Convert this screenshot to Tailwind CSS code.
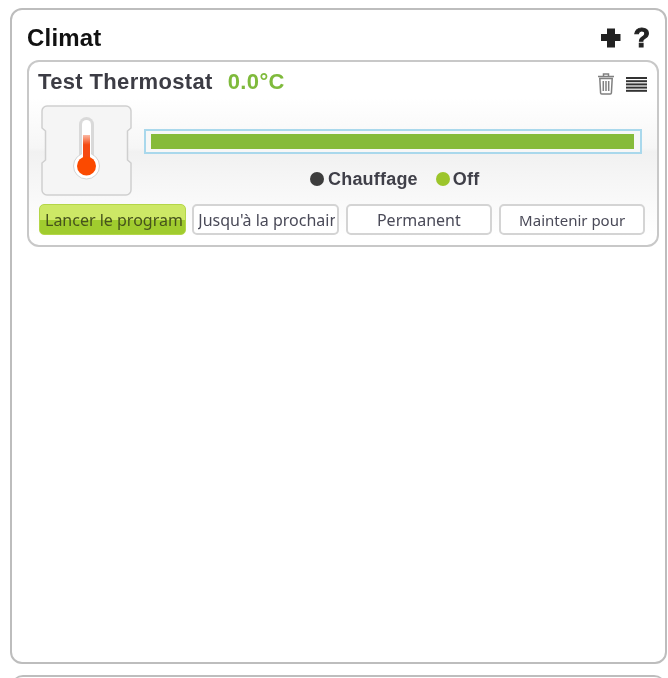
<!DOCTYPE html>
<html lang="fr">
<head>
<meta charset="UTF-8">
<title>Climat</title>
<script src="https://cdn.jsdelivr.net/npm/@tailwindcss/browser@4"></script>
</head>
<body class="bg-white">
<div class="w-[668px] h-[678px] overflow-hidden font-['Liberation_Sans',sans-serif] pt-2 pl-[10px] blur-[0.4px]">
  <!-- Climat panel -->
  <section class="w-[657px] h-[656px] border-2 border-[#bdbdbd] rounded-xl px-[15px] bg-white">
    <header class="flex justify-between items-center h-[50px] pt-[6px]">
      <h2 class="text-[24px] font-bold text-[#111] tracking-[0.2px]">Climat</h2>
      <div class="flex items-center gap-[13px] text-[#222]">
        <svg width="20" height="20" viewBox="0 0 20 20"><path d="M6 0.500h8v5.500h5.500v7h-5.500v6.500h-8v-6.500h-6v-7h6z" fill="#222"/></svg>
        <span class="text-[27px] leading-none font-black [-webkit-text-stroke:1px_#222]">?</span>
      </div>
    </header>
    <!-- thermostat card -->
    <article class="w-[632px] h-[187px] border-2 border-[#c8c8c8] rounded-xl bg-[linear-gradient(to_bottom,#fff_20%,#f6f6f6_47%,#f1f1f1_49%,#fff_95%)] px-[10px]">
      <div class="flex justify-between items-start h-[43px] pt-[8px]">
        <div class="flex items-center text-[22px] font-bold leading-6 tracking-[0.35px] -ml-[1px]">
          <span class="text-[#3c3c44]">Test Thermostat</span>
          <span class="ml-[15px] text-[#7fba3c]">0.0°C</span>
        </div>
        <div class="flex items-start gap-[11px] pt-[3px]">
          <svg width="18" height="22" viewBox="0 0 18 22" fill="none" stroke="#808080" stroke-width="1.500">
            <path d="M6.500 3v-2h5v2M1 3.500h16M2.800 5.500h12.400l-.8 14.500a1.500 1.500 0 0 1-1.500 1h-7.800a1.500 1.500 0 0 1-1.500-1z"/>
            <path d="M6.300 8v10M9 8v10M11.700 8v10" stroke-width="1.500"/>
          </svg>
          <svg class="mt-[4px]" width="21" height="15" viewBox="0 0 21 15" fill="#333">
            <rect y="0" width="21" height="2"/><rect y="3.200" width="21" height="2"/><rect y="6.400" width="21" height="2"/><rect y="9.600" width="21" height="2"/><rect y="12.800" width="21" height="2"/>
          </svg>
        </div>
      </div>
      <div class="flex h-[99px] pl-[2px]">
        <!-- thermometer tile -->
        <svg class="shrink-0" width="91" height="91" viewBox="0 0 91 91">
          <defs>
            <linearGradient id="mercury" x1="0" y1="0" x2="0" y2="1">
              <stop offset="0" stop-color="#fbb9a4"/>
              <stop offset="0.35" stop-color="#f54a12"/>
              <stop offset="1" stop-color="#f54a12"/>
            </linearGradient>
          </defs>
          <path d="M6 1h79a5 5 0 0 1 5 5v17l-3.500 3v29l3.500 3v27a5 5 0 0 1-5 5h-79a5 5 0 0 1-5-5v-27l3.500-3v-29l-3.500-3v-17a5 5 0 0 1 5-5z" fill="#f5f5f5" stroke="#cfcfcf" stroke-width="1.500"/>
          <rect x="38" y="12" width="15" height="46" rx="7.500" fill="#d9d9d9"/>
          <circle cx="45.500" cy="61" r="13" fill="#fff" stroke="#d4d4d4"/>
          <rect x="41" y="15" width="9" height="40" rx="4.500" fill="#fff"/>
          <rect x="42" y="30" width="7" height="28" fill="url(#mercury)"/>
          <circle cx="45.500" cy="61" r="9.500" fill="#fb4a00"/>
        </svg>
        <div class="flex-1 pl-[12px]">
          <div class="mt-[24px] w-[498px] h-[25px] border-2 border-[#a9d8ec] bg-[#f7f7f7] pt-[3px] pb-[3px] pl-[5px] pr-[6px]">
            <div class="h-full w-full bg-[#86bb3a]"></div>
          </div>
          <div class="flex items-center text-[18px] font-bold text-[#3f3f48] mt-[13px] ml-[166px] h-[24px] tracking-[0.2px]">
            <span class="w-[14px] h-[14px] rounded-full bg-[#3d3d3d] mr-[4px]"></span>
            <span>Chauffage</span>
            <span class="w-[14px] h-[14px] rounded-full bg-[#9cc52b] ml-[18px] mr-[3px]"></span>
            <span>Off</span>
          </div>
        </div>
      </div>
      <div class="flex gap-[6.800px] text-[16px] font-['Noto_Sans',sans-serif]">
        <div class="w-[146.500px] h-[31px] leading-[31px] rounded-[5px] border border-[#b4d648] bg-[linear-gradient(to_bottom,#cde866_50%,#a0cc2e_52%)] text-[#46531c] pl-[5px] pr-[1px]"><div class="overflow-hidden whitespace-nowrap">Lancer le programme</div></div>
        <div class="w-[146.500px] h-[31px] leading-[29px] rounded-[5px] border-2 border-[#d4d4d4] bg-white text-[#4a4a58] pl-[4px] pr-[2px]"><div class="overflow-hidden whitespace-nowrap">Jusqu'à la prochaine</div></div>
        <div class="w-[146.500px] h-[31px] leading-[29px] rounded-[5px] border-2 border-[#d4d4d4] bg-white text-[#4a4a58] text-center">Permanent</div>
        <div class="w-[146.500px] h-[31px] leading-[29px] rounded-[5px] border-2 border-[#d4d4d4] bg-white text-[15px] text-[#4a4a58] text-center">Maintenir pour</div>
      </div>
    </article>
  </section>
  <!-- next panel, cut off at the bottom -->
  <div class="w-[655px] h-[20px] mt-[11px] ml-[1px] border-t-2 border-[#bdbdbd] rounded-t-xl"></div>
</div>
</body>
</html>
